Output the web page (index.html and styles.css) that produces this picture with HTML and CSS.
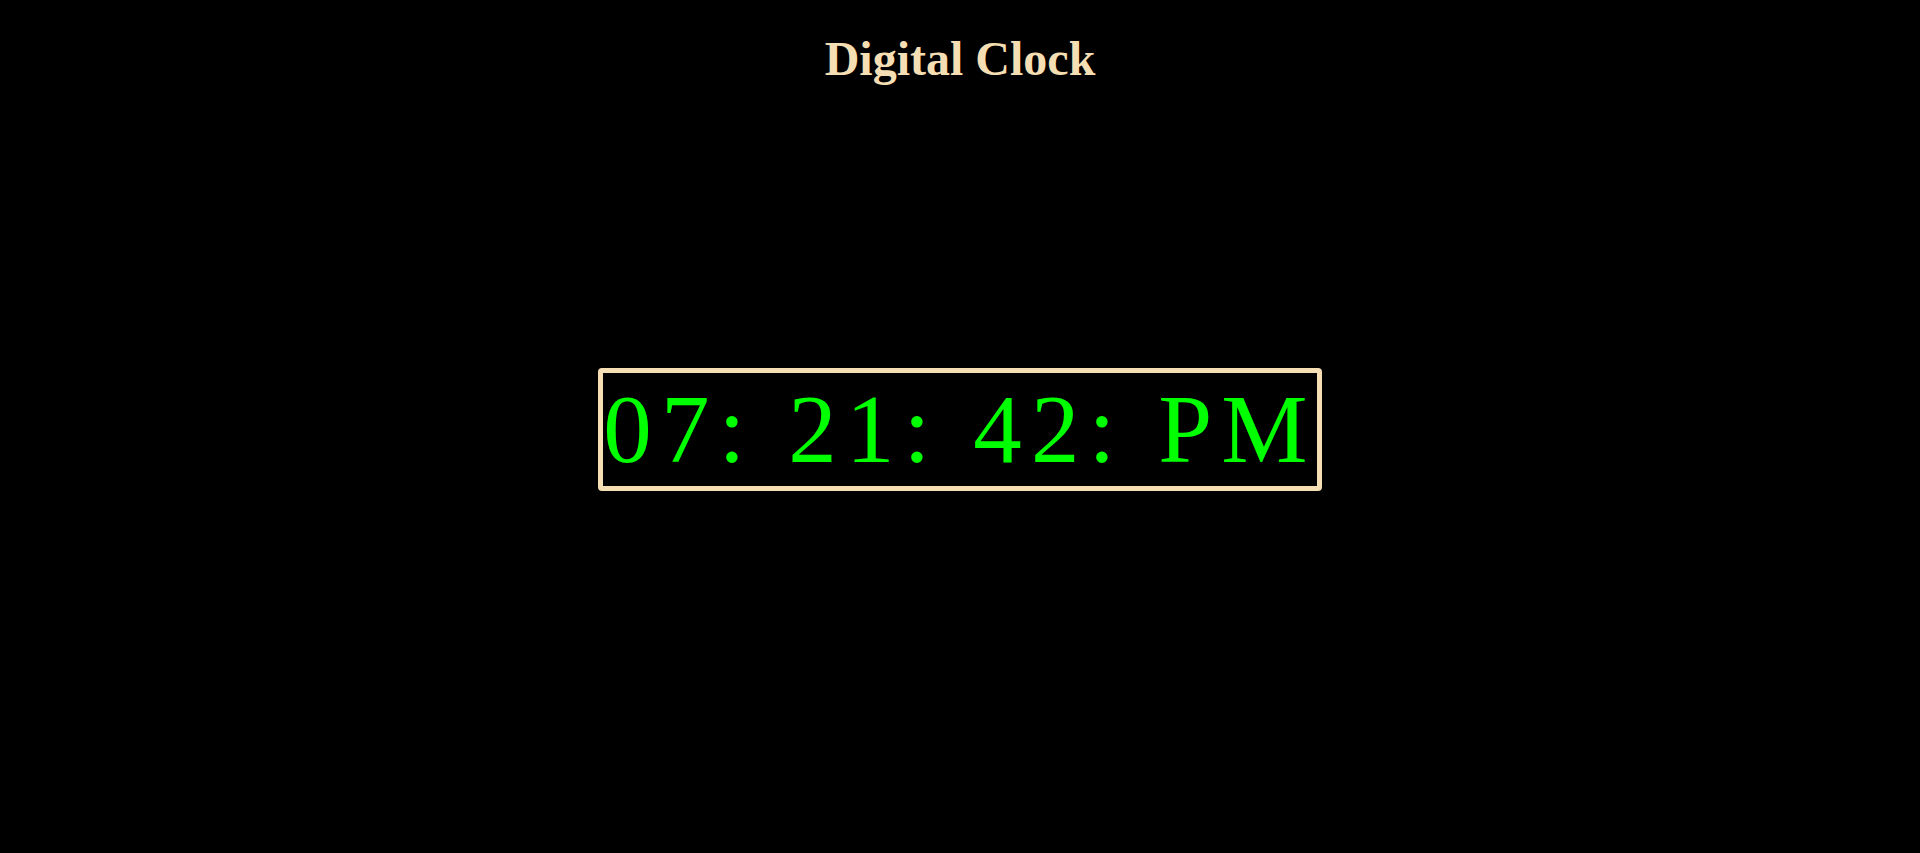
FILE: index.html
```html
<!DOCTYPE html>
<html lang="en">
<head>
<meta charset="utf-8">
<title>Digital Clock</title>
<link rel="stylesheet" href="styles.css">
</head>
<body>
<h1 class="title">Digital Clock</h1>
<div class="clock-wrap">
  <div class="clock">07: 21: 42: PM</div>
</div>
</body>
</html>
```
FILE: styles.css
```css
html, body {
  background: #000;
}
body {
  margin: 0;
  font-family: "Liberation Serif", "Times New Roman", serif;
}
.title {
  margin: 32px 0 0;
  font-size: 48px;
  font-weight: bold;
  line-height: 53px;
  text-align: center;
  color: #f5deb3;
}
.clock-wrap {
  display: flex;
  justify-content: center;
  margin-top: 283px;
}
.clock {
  border: 5px solid #f5deb3;
  border-radius: 4px;
  color: #00ff00;
  font-size: 97px;
  letter-spacing: 9.2px;
  line-height: 113px;
  white-space: pre;
}
```
